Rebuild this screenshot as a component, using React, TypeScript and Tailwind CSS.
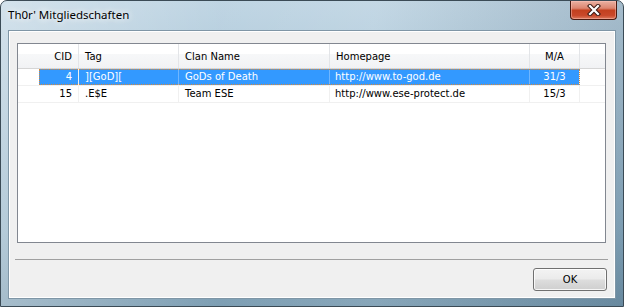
import React from "react";

const cols = [
  { w: "w-[61px]", label: "CID", align: "right" },
  { w: "w-[100px]", label: "Tag", align: "left" },
  { w: "w-[151px]", label: "Clan Name", align: "left" },
  { w: "w-[200px]", label: "Homepage", align: "left" },
  { w: "w-[50px]", label: "M/A", align: "center" },
];

const rows = [
  { cid: "4", tag: "][GoD][", name: "GoDs of Death", hp: "http://www.to-god.de", ma: "31/3", sel: true },
  { cid: "15", tag: ".E$E", name: "Team ESE", hp: "http://www.ese-protect.de", ma: "15/3", sel: false },
];

function Row({ r }: { r: (typeof rows)[number] }) {
  const txt = r.sel ? "text-white" : "text-black";
  const bg = r.sel ? "bg-[#3399ff]" : "";
  const line = r.sel ? "border-[#6fb6ff]" : "border-[#f0f0f0]";
  return (
    <div className="relative flex h-[17px] border-b border-[#f0f0f0]">
      <div className="flex w-[61px] border-r border-[#f0f0f0]">
        <div className="w-[21px]" />
        <div className={`flex-1 flex items-center justify-end pr-[6px] ${bg} ${txt}`}>{r.cid}</div>
      </div>
      <div className={`w-[100px] flex items-center pl-[6px] border-r ${line} ${bg} ${txt}`}>{r.tag}</div>
      <div className={`w-[151px] flex items-center pl-[6px] border-r ${line} ${bg} ${txt}`}>{r.name}</div>
      <div className={`w-[200px] flex items-center pl-[5px] border-r ${line} ${bg} ${txt}`}>{r.hp}</div>
      <div className={`w-[50px] flex items-center justify-center border-r border-[#f0f0f0] ${bg} ${txt}`}>{r.ma}</div>
      <div className="flex-1" />
      {r.sel && (
        <div className="absolute left-[21px] top-0 w-[541px] h-[16px] border border-dotted border-[#d3893f] pointer-events-none" />
      )}
    </div>
  );
}

export default function App() {
  return (
    <div className="relative w-[624px] h-[307px] overflow-hidden rounded-t-[7px] border border-[#3b4b56] bg-[linear-gradient(180deg,#bcd3e2_0%,#a4c0d2_40%,#8eb0c5_75%,#7699af_100%)] [font-family:'DejaVu_Sans',sans-serif] text-[10px] leading-none">
      <div className="absolute inset-0 bg-[linear-gradient(90deg,rgba(255,255,255,0.35)_0%,rgba(255,255,255,0.05)_35%,rgba(255,255,255,0.12)_60%,rgba(0,20,40,0.12)_100%)] pointer-events-none" />
      <div className="relative h-[29px] flex items-start">
        <span className="ml-[7px] mt-[8px] text-[11.5px] text-black [font-family:'Noto_Sans',sans-serif] leading-none [text-shadow:0_0_6px_rgba(255,255,255,0.95),0_0_10px_rgba(255,255,255,0.8)]">
          Th0r' Mitgliedschaften
        </span>
      </div>
      <button className="absolute top-0 right-[6px] w-[47px] h-[19px] rounded-b-[4px] border border-t-0 border-[#4a1a10] bg-[linear-gradient(180deg,#eab1a2_0%,#dc8570_40%,#c3401f_52%,#c9482a_80%,#dc7a5e_100%)] shadow-[inset_0_0_0_1px_rgba(255,200,190,0.45)] flex items-center justify-center">
        <svg width="14" height="12" viewBox="0 0 14 12">
          <path d="M3 2 L11 10 M11 2 L3 10" stroke="#3b1a14" strokeWidth="4.2" strokeLinecap="square" />
          <path d="M3 2 L11 10 M11 2 L3 10" stroke="#ffffff" strokeWidth="2.2" strokeLinecap="square" />
        </svg>
      </button>
      <div className="relative ml-[7px] w-[608px] h-[269px] bg-[#f0f0f0] border border-[#7f96a6] shadow-[inset_1px_1px_0_#ffffff,inset_-1px_-1px_0_#ffffff] flex flex-col">
        <div className="ml-[8px] mt-[12px] w-[589px] h-[200px] border border-[#828790] bg-white flex flex-col">
          <div className="flex h-[25px] border-b border-[#d5d5d5] bg-[linear-gradient(180deg,#ffffff_0%,#ffffff_40%,#f7f8f9_41%,#f1f2f4_100%)]">
            {cols.map((c) => (
              <div
                key={c.label}
                className={`${c.w} flex items-center pt-[2px] border-r border-[#e3e5e8] text-black ${
                  c.align === "right" ? "justify-end pr-[6px]" : c.align === "center" ? "justify-center" : "pl-[6px]"
                }`}
              >
                {c.label}
              </div>
            ))}
            <div className="flex-1" />
          </div>
          {rows.map((r) => (
            <Row key={r.cid} r={r} />
          ))}
        </div>
        <div className="ml-[6px] mt-[16px] w-[593px] h-px bg-[#a0a0a0]" />
        <button className="self-end mr-[8px] mt-[8px] w-[74px] h-[23px] rounded-[3px] border border-[#707070] bg-[linear-gradient(180deg,#f3f3f3_0%,#ebebeb_48%,#dddddd_52%,#cfcfcf_100%)] shadow-[inset_0_0_0_1px_rgba(255,255,255,0.8)] text-black flex items-center justify-center">
          OK
        </button>
      </div>
    </div>
  );
}
